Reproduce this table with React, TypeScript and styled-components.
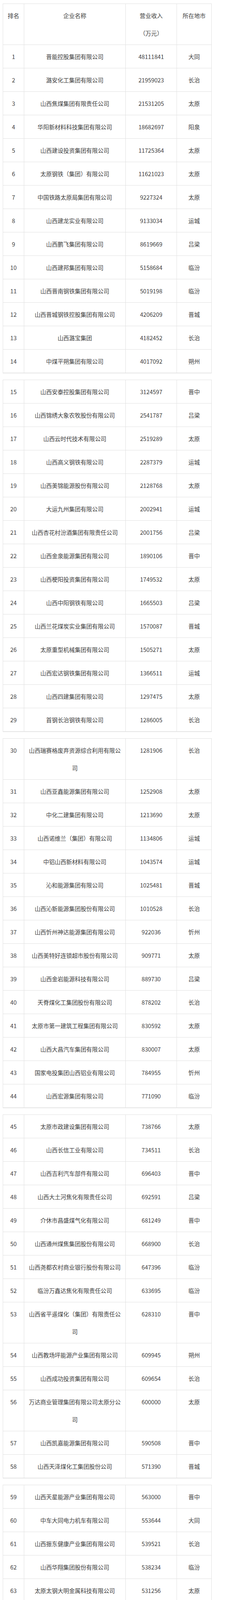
import React from "react";
import styled, { createGlobalStyle } from "styled-components";

type Company = [number, string, string, string];

const companies: Company[] = [
  [1, "晋能控股集团有限公司", "48111841", "大同"],
  [2, "潞安化工集团有限公司", "21959023", "长治"],
  [3, "山西焦煤集团有限责任公司", "21531205", "太原"],
  [4, "华阳新材料科技集团有限公司", "18682697", "阳泉"],
  [5, "山西建设投资集团有限公司", "11725364", "太原"],
  [6, "太原钢铁（集团）有限公司", "11621023", "太原"],
  [7, "中国铁路太原局集团有限公司", "9227324", "太原"],
  [8, "山西建龙实业有限公司", "9133034", "运城"],
  [9, "山西鹏飞集团有限公司", "8619669", "吕梁"],
  [10, "山西建邦集团有限公司", "5158684", "临汾"],
  [11, "山西晋南钢铁集团有限公司", "5019198", "临汾"],
  [12, "山西晋城钢铁控股集团有限公司", "4206209", "晋城"],
  [13, "山西潞宝集团", "4182452", "长治"],
  [14, "中煤平朔集团有限公司", "4017092", "朔州"],
  [15, "山西安泰控股集团有限公司", "3124597", "晋中"],
  [16, "山西锦绣大象农牧股份有限公司", "2541787", "吕梁"],
  [17, "山西云时代技术有限公司", "2519289", "太原"],
  [18, "山西高义钢铁有限公司", "2287379", "运城"],
  [19, "山西美锦能源股份有限公司", "2128768", "太原"],
  [20, "大运九州集团有限公司", "2002941", "运城"],
  [21, "山西杏花村汾酒集团有限责任公司", "2001756", "吕梁"],
  [22, "山西金泉能源集团有限公司", "1890106", "晋中"],
  [23, "山西梗阳投资集团有限公司", "1749532", "太原"],
  [24, "山西中阳钢铁有限公司", "1665503", "吕梁"],
  [25, "山西兰花煤炭实业集团有限公司", "1570087", "晋城"],
  [26, "太原重型机械集团有限公司", "1505271", "太原"],
  [27, "山西宏达钢铁集团有限公司", "1366511", "运城"],
  [28, "山西四建集团有限公司", "1297475", "太原"],
  [29, "首钢长治钢铁有限公司", "1286005", "长治"],
  [30, "山西瑞赛格废弃资源综合利用有限公司", "1281906", "长治"],
  [31, "山西亚鑫能源集团有限公司", "1252908", "太原"],
  [32, "中化二建集团有限公司", "1213690", "太原"],
  [33, "山西诺维兰（集团）有限公司", "1134806", "运城"],
  [34, "中铝山西新材料有限公司", "1043574", "运城"],
  [35, "沁和能源集团有限公司", "1025481", "晋城"],
  [36, "山西沁新能源集团股份有限公司", "1010528", "长治"],
  [37, "山西忻州神达能源集团有限公司", "922036", "忻州"],
  [38, "山西美特好连锁超市股份有限公司", "909771", "太原"],
  [39, "山西金岩能源科技有限公司", "889730", "吕梁"],
  [40, "天脊煤化工集团股份有限公司", "878202", "长治"],
  [41, "太原市第一建筑工程集团有限公司", "830592", "太原"],
  [42, "山西大昌汽车集团有限公司", "830007", "太原"],
  [43, "国家电投集团山西铝业有限公司", "784955", "忻州"],
  [44, "山西宏源集团有限公司", "771090", "临汾"],
  [45, "太原市政建设集团有限公司", "738766", "太原"],
  [46, "山西长信工业有限公司", "734511", "长治"],
  [47, "山西吉利汽车部件有限公司", "696403", "晋中"],
  [48, "山西大土河焦化有限责任公司", "692591", "吕梁"],
  [49, "介休市昌盛煤气化有限公司", "681249", "晋中"],
  [50, "山西通州煤焦集团股份有限公司", "668900", "长治"],
  [51, "山西尧都农村商业银行股份有限公司", "647396", "临汾"],
  [52, "临汾万鑫达焦化有限责任公司", "633695", "临汾"],
  [53, "山西省平遥煤化（集团）有限责任公司", "628310", "晋中"],
  [54, "山西教场坪能源产业集团有限公司", "609945", "朔州"],
  [55, "山西成功投资集团有限公司", "609654", "长治"],
  [56, "万达商业管理集团有限公司太原分公司", "600000", "太原"],
  [57, "山西凯嘉能源集团有限公司", "590508", "晋中"],
  [58, "山西天泽煤化工集团股份公司", "571390", "晋城"],
  [59, "山西天星能源产业集团有限公司", "563000", "晋中"],
  [60, "中车大同电力机车有限公司", "553644", "大同"],
  [61, "山西振东健康产业集团有限公司", "539521", "长治"],
  [62, "山西华翔集团股份有限公司", "538234", "临汾"],
  [63, "太原太钢大明金属科技有限公司", "531256", "太原"],
  [64, "中国能源建设集团山西省电力勘测设计院有限公司", "505923", "太原"],
  [65, "山西昆明烟草有限责任公司", "500899", "太原"],
  [66, "山西南耀集团", "499707", "长治"],
  [67, "山西华宇集团有限公司", "492015", "太原"],
  [68, "山西榆社化工股份有限公司", "485827", "晋中"],
  [69, "金烨钢铁集团有限公司", "472415", "长治"],
  [70, "山西省太原唐久超市有限公司", "471975", "太原"],
  [71, "长治市霍家工业有限公司", "466590", "长治"],
  [72, "同煤浙能麻家梁煤业有限责任公司", "446845", "朔州"],
  [73, "交城义望铁合金有限责任公司", "443332", "吕梁"],
  [74, "居然之家山西分公司", "402000", "太原"],
  [75, "华润置地（太原）有限公司（太原万象城）", "390000", "太原"],
  [76, "山西聚源煤化有限公司", "383831", "晋中"],
  [77, "阳城皇城相府（集团）实业有限公司", "377840", "晋城"],
  [78, "山西宝力金属原料集团有限公司", "375470", "太原"],
  [79, "山西太谷恒达煤气化有限公司", "367020", "晋中"],
  [80, "国能山西河曲发电有限公司", "358422", "忻州"],
  [81, "经纬智能纺织机械有限公司", "355329", "晋中"],
  [82, "山西苏宁易购销售有限公司", "353600", "太原"],
  [83, "山西玉龙投资集团有限公司", "326634", "朔州"],
  [84, "太原市热力集团有限责任公司", "325649", "太原"],
  [85, "海纳实业控股集团有限公司", "324014", "晋中"],
  [86, "山西中德投资集团有限公司", "320657", "长治"],
  [87, "山西长城建设投资集团有限公司", "320126", "太原"],
  [88, "山西新石能源科技有限公司", "315615", "忻州"],
  [89, "山西寿阳段王煤业集团有限公司", "310945", "晋中"],
  [90, "山西昔阳丰汇煤业有限责任公司", "310235", "晋中"],
  [91, "山西潞安能化生产服务有限公司", "305600", "长治"],
  [92, "山西山水水泥有限公司", "301098", "太原"],
  [93, "山西航天清华装备有限责任公司", "300907", "长治"],
  [94, "太原服装城（集团）有限公司", "295718", "太原"],
  [95, "太原天然气有限公司", "286797", "太原"],
  [96, "山西兰田实业集团有限公司", "286419", "晋中"],
  [97, "山西西建集团有限公司", "285662", "运城"],
  [98, "山西天美杉杉奥特莱斯购物广场有限公司", "280000", "晋中"],
  [99, "亚宝药业集团股份有限公司", "273000", "运城"],
  [100, "山西茂业置地房地产开发有限公司茂业百货分公司", "273000", "太原"],
];

// the source is several stitched table images; each block starts at these ranks
const blockStarts = [1, 15, 30, 45, 59, 74, 89];

const GlobalStyle = createGlobalStyle`
  html, body {
    margin: 0;
    background: #ffffff;
  }
`;

const Page = styled.div`
  width: 640px;
  box-sizing: border-box;
  padding: 9px 0 0 7px;
  display: flex;
  flex-direction: column;
  gap: 17px;
  font-family: "Noto Sans CJK SC", "Noto Sans", sans-serif;
  color: #3d3d3d;
`;

const Sheet = styled.table`
  width: 534px;
  table-layout: fixed;
  border-collapse: collapse;
  border: 1px solid #d2d2d2;
  box-shadow: 0 1px 0 #e9e9e9;
`;

const Col = styled.col<{ $w: number }>`
  width: ${(p) => p.$w}px;
`;

const Cell = styled.td<{ $pad?: number }>`
  border: 1px solid #e1e1e1;
  padding: 7px ${(p) => p.$pad ?? 4}px;
  height: 45px;
  box-sizing: content-box;
  font-size: 14.7px;
  line-height: 45px;
  font-weight: 400;
  text-align: center;
  vertical-align: top;
`;

const HeadCell = styled(Cell).attrs({ as: "th" })``;

function Block({ rows, withHead }: { rows: Company[]; withHead: boolean }) {
  return (
    <Sheet>
      <colgroup>
        <Col $w={54} />
        <Col $w={260} />
        <Col $w={131} />
        <Col $w={89} />
      </colgroup>
      <tbody>
        {withHead && (
          <tr>
            <HeadCell>排名</HeadCell>
            <HeadCell $pad={8}>企业名称</HeadCell>
            <HeadCell>
              营业收入
              <br />
              （万元）
            </HeadCell>
            <HeadCell>所在地市</HeadCell>
          </tr>
        )}
        {rows.map(([rank, name, revenue, city]) => (
          <tr key={rank}>
            <Cell>{rank}</Cell>
            <Cell $pad={8}>{name}</Cell>
            <Cell>{revenue}</Cell>
            <Cell>{city}</Cell>
          </tr>
        ))}
      </tbody>
    </Sheet>
  );
}

export default function App() {
  const blocks = blockStarts.map((start, i) => {
    const end = blockStarts[i + 1] ?? 101;
    return companies.filter(([rank]) => rank >= start && rank < end);
  });

  return (
    <>
      <GlobalStyle />
      <Page>
        {blocks.map((rows, i) => (
          <Block key={i} rows={rows} withHead={i === 0} />
        ))}
      </Page>
    </>
  );
}
